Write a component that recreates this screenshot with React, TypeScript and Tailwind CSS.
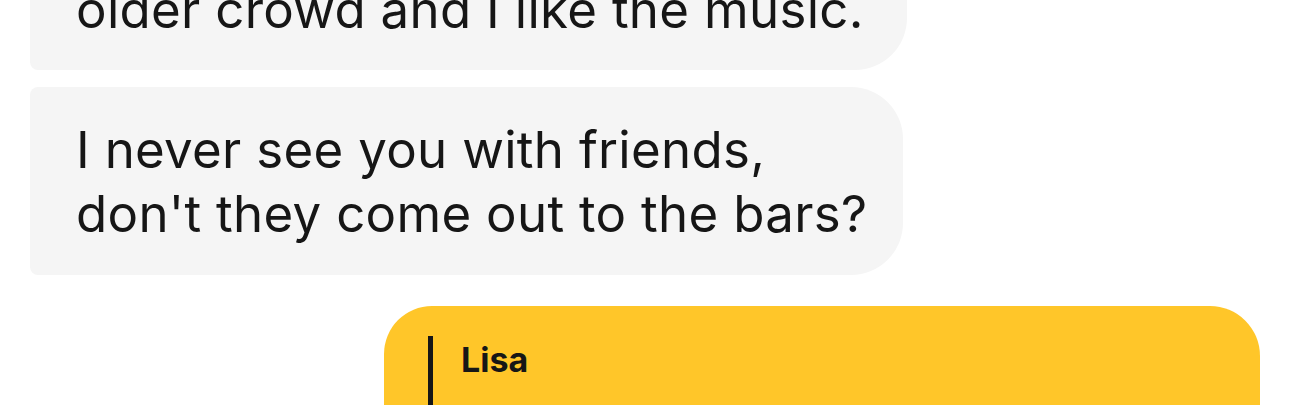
export default function App() {
  return (
    <div className="w-[1290px] h-[405px] overflow-hidden bg-white font-['Inter',sans-serif] text-[#161616]">
      <div className="flex flex-col items-start px-[30px] -mt-[53px]">
        {/* incoming messages */}
        <div className="w-[877px] bg-[#f5f5f5] rounded-l-[8px] rounded-r-[52px] pl-[46px] pr-[30px] pt-[31px] pb-[28px] text-[51px] tracking-[0.3px] leading-[64px] whitespace-nowrap">
          <p>older crowd and I like the music.</p>
        </div>
        <div className="mt-[17px] w-[873px] bg-[#f5f5f5] rounded-l-[8px] rounded-r-[52px] pl-[46px] pr-[30px] pt-[31px] pb-[29px] text-[51px] tracking-[0.3px] leading-[64px] whitespace-nowrap">
          <p>I never see you with friends,</p>
          <p>don't they come out to the bars?</p>
        </div>

        {/* reply with quote */}
        <div className="self-end mt-[31px] w-[876px] bg-[#ffc629] rounded-tl-[48px] rounded-tr-[50px] rounded-bl-[48px] rounded-br-[8px] pl-[44px] pr-[46px] pt-[30px] pb-[30px]">
          <div className="border-l-[5px] border-[#161616] pl-[28px] pt-[4px]">
            <p className="font-bold text-[34px] leading-[40px]">Lisa</p>
            <p className="mt-[40px] text-[40px] leading-[52px]">I never see you with friends, don't they come out to the bars?</p>
          </div>
          <p className="mt-[20px] text-[51px] leading-[64px]">They do!</p>
        </div>
      </div>
    </div>
  );
}
